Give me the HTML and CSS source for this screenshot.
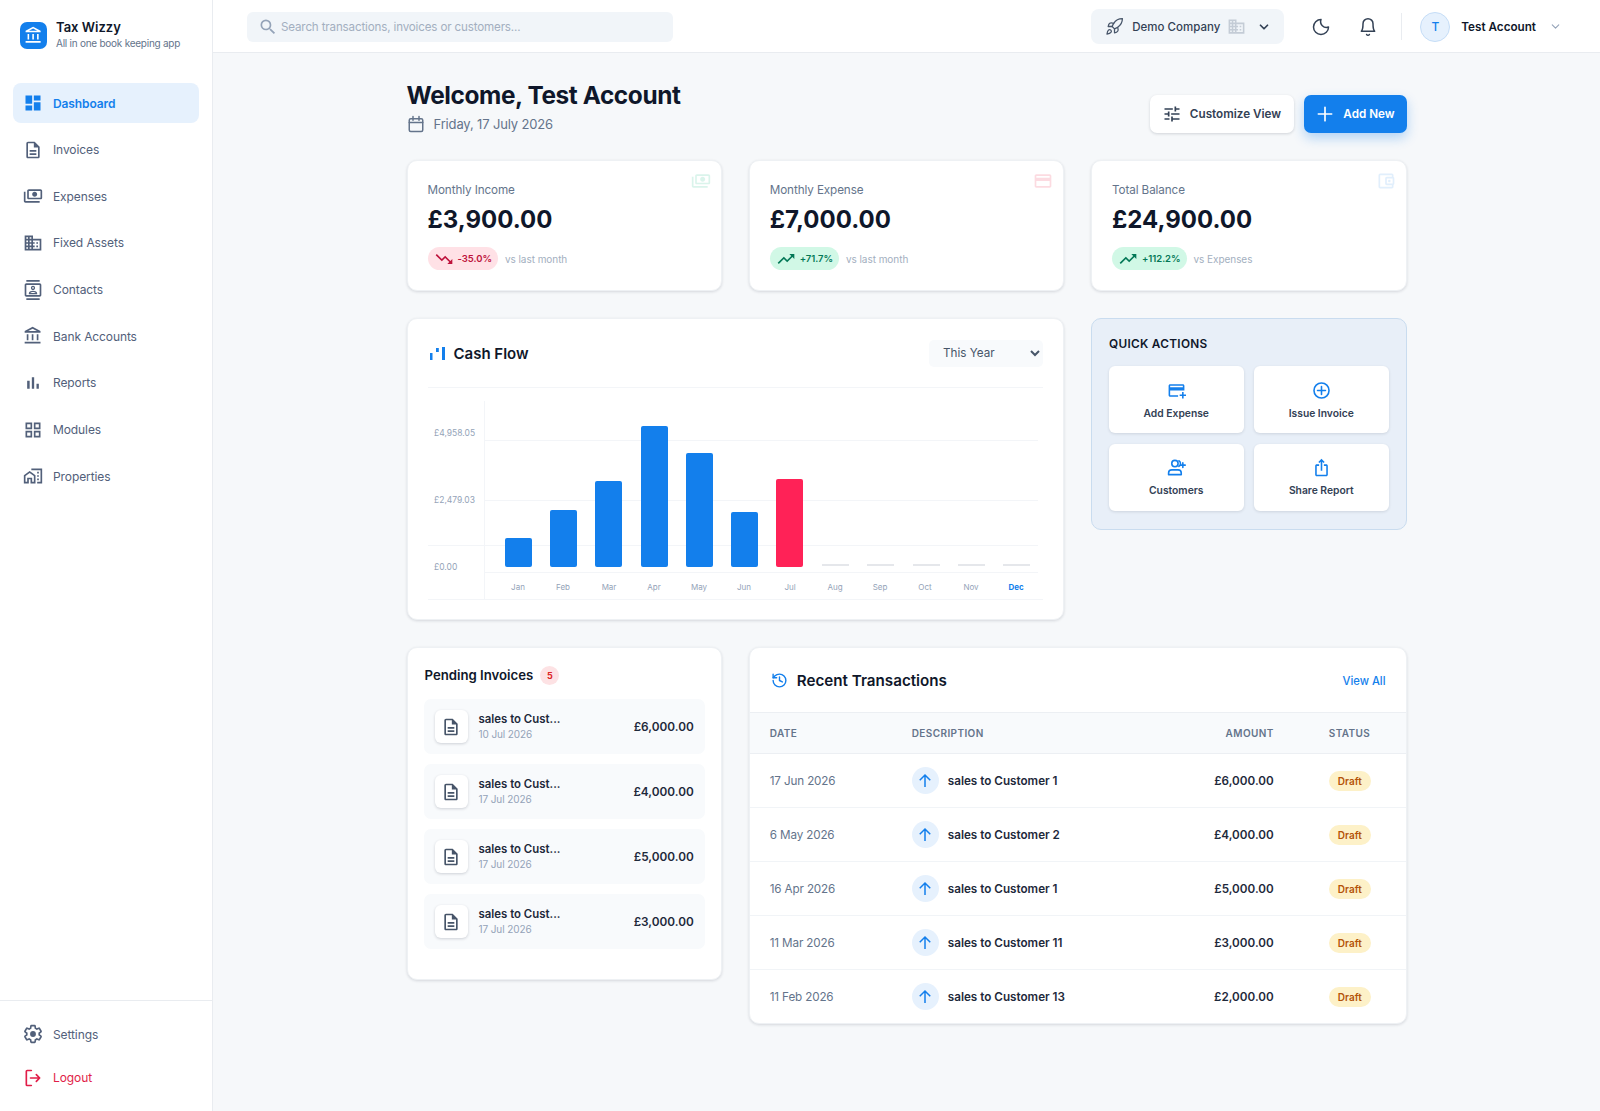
FILE: index.html
```html
<!DOCTYPE html>
<html lang="en">
<head>
  <meta charset="UTF-8" />
  <meta name="viewport" content="width=device-width, initial-scale=1.0"/>
  <title>Tax Wizzy - Dashboard</title>
  <link rel="stylesheet" href="styles.css">
</head>
<body>
  <svg class="sprites" width="0" height="0">
    <symbol id="i-doc" viewBox="0 0 24 24"><path d="M8 16h8v2H8zm0-4h8v2H8zm6-10H6c-1.1 0-2 .9-2 2v16c0 1.1.89 2 1.99 2H18c1.1 0 2-.9 2-2V8l-6-6zm4 18H6V4h7v5h5v11z"/></symbol>
    <symbol id="i-up" viewBox="0 0 24 24"><path d="M12 20V4M5 11l7-7 7 7" fill="none" stroke="currentColor" stroke-width="2"/></symbol>
    <symbol id="i-trend-up" viewBox="0 0 24 24"><path d="M16 6l2.29 2.29-4.88 4.88-4-4L2 16.59 3.41 18l6-6 4 4 6.3-6.29L22 12V6z"/></symbol>
    <symbol id="i-trend-down" viewBox="0 0 24 24"><path d="M16 18l2.29-2.29-4.88-4.88-4 4L2 7.41 3.41 6l6 6 4-4 6.3 6.29L22 12v6z"/></symbol>
    <symbol id="i-domain" viewBox="0 0 24 24"><path d="M12 7V3H2v18h20V7H12zM6 19H4v-2h2v2zm0-4H4v-2h2v2zm0-4H4V9h2v2zm0-4H4V5h2v2zm4 12H8v-2h2v2zm0-4H8v-2h2v2zm0-4H8V9h2v2zm0-4H8V5h2v2zm10 12h-8v-2h2v-2h-2v-2h2v-2h-2V9h8v10zm-2-8h-2v2h2v-2zm0 4h-2v2h2v-2z"/></symbol>
    <symbol id="i-bank" viewBox="0 0 24 24"><path d="M6.5 10h-2v7h2v-7zm6 0h-2v7h2v-7zm8.5 9H2v2h19v-2zm-2.5-9h-2v7h2v-7zm-7-6.74L16.71 6H6.29l5.21-2.74m0-2.26L2 6v2h19V6l-9.5-5z"/></symbol>
    <symbol id="i-money" viewBox="0 0 24 24"><path d="M5 14V6c0-1.1.9-2 2-2h14c1.1 0 2 .9 2 2v8c0 1.1-.9 2-2 2H7c-1.1 0-2-.9-2-2zm2 0h14V6H7v8zm7-7c1.66 0 3 1.34 3 3s-1.34 3-3 3-3-1.34-3-3 1.34-3 3-3zM1 7v11c0 1.1.9 2 2 2h17v-2H3V7H1z"/></symbol>
  </svg>

  <aside class="sidebar">
    <div class="brand">
      <div class="brand-logo"><svg viewBox="0 0 24 24"><use href="#i-bank"/></svg></div>
      <div>
        <div class="brand-name">Tax Wizzy</div>
        <div class="brand-sub">All in one book keeping app</div>
      </div>
    </div>

    <nav class="nav">
      <a class="nav-item active"><svg viewBox="0 0 24 24"><path d="M3 13h8V3H3v10zm0 8h8v-6H3v6zm10 0h8V11h-8v10zm0-18v6h8V3h-8z"/></svg>Dashboard</a>
      <a class="nav-item"><svg viewBox="0 0 24 24"><use href="#i-doc"/></svg>Invoices</a>
      <a class="nav-item"><svg viewBox="0 0 24 24"><use href="#i-money"/></svg>Expenses</a>
      <a class="nav-item"><svg viewBox="0 0 24 24"><use href="#i-domain"/></svg>Fixed Assets</a>
      <a class="nav-item"><svg viewBox="0 0 24 24"><path d="M20 0H4v2h16V0zM4 24h16v-2H4v2zM20 4H4c-1.1 0-2 .9-2 2v12c0 1.1.9 2 2 2h16c1.1 0 2-.9 2-2V6c0-1.1-.9-2-2-2zm0 14H4V6h16v12zm-8-6c1.38 0 2.5-1.12 2.5-2.5S13.38 7 12 7 9.5 8.12 9.5 9.5 10.62 12 12 12zm0-3.5c.55 0 1 .45 1 1s-.45 1-1 1-1-.45-1-1 .45-1 1-1zm5 7.49C17 13.9 13.69 13 12 13s-5 .9-5 2.99V17h10v-1.01zM8.81 15.5c.61-.52 2.03-1 3.19-1 1.17 0 2.59.48 3.2 1H8.81z"/></svg>Contacts</a>
      <a class="nav-item"><svg viewBox="0 0 24 24"><use href="#i-bank"/></svg>Bank Accounts</a>
      <a class="nav-item"><svg viewBox="0 0 24 24"><path d="M5 9.2h3V19H5zM10.6 5h2.8v14h-2.8zm5.6 8H19v6h-2.8z"/></svg>Reports</a>
      <a class="nav-item"><svg viewBox="0 0 24 24"><path d="M3 3v8h8V3H3zm6 6H5V5h4v4zm-6 4v8h8v-8H3zm6 6H5v-4h4v4zm4-16v8h8V3h-8zm6 6h-4V5h4v4zm-6 4v8h8v-8h-8zm6 6h-4v-4h4v4z"/></svg>Modules</a>
      <a class="nav-item"><svg viewBox="0 0 24 24"><path d="M1 11v10h6v-5h2v5h6V11L8 6l-7 5zm12 8h-2v-5H5v5H3v-7l5-3.5 5 3.5v7zM10 3v2h11v14h-4v2h6V3H10zm7 4h2v2h-2V7zm0 4h2v2h-2v-2zm0 4h2v2h-2v-2z"/></svg>Properties</a>
    </nav>

    <div class="sidebar-foot">
      <a class="nav-item"><svg viewBox="0 0 24 24"><path class="gear" d="M19.43 12.98c.04-.32.07-.64.07-.98 0-.34-.03-.66-.07-.98l2.11-1.65c.19-.15.24-.42.12-.64l-2-3.46a.5.5 0 0 0-.61-.22l-2.49 1c-.52-.4-1.08-.73-1.69-.98l-.38-2.65A.49.49 0 0 0 14 2h-4c-.25 0-.46.18-.49.42l-.38 2.65c-.61.25-1.17.59-1.69.98l-2.49-1a.57.57 0 0 0-.18-.03c-.17 0-.34.09-.43.25l-2 3.46c-.13.22-.07.49.12.64l2.11 1.65c-.04.32-.07.65-.07.98 0 .33.03.66.07.98l-2.11 1.65c-.19.15-.24.42-.12.64l2 3.46a.5.5 0 0 0 .61.22l2.49-1c.52.4 1.08.73 1.69.98l.38 2.65c.03.24.24.42.49.42h4c.25 0 .46-.18.49-.42l.38-2.65c.61-.25 1.17-.59 1.69-.98l2.49 1c.06.02.12.03.18.03.17 0 .34-.09.43-.25l2-3.46c.12-.22.07-.49-.12-.64l-2.11-1.65z"/><circle cx="12" cy="12" r="3.5"/></svg>Settings</a>
      <a class="nav-item logout"><svg viewBox="0 0 24 24"><path class="line" d="M10 3H5a1 1 0 0 0-1 1v16a1 1 0 0 0 1 1h5M9 12h11M16 8l4 4-4 4"/></svg>Logout</a>
    </div>
  </aside>

  <div class="page">
    <header class="topbar">
      <div class="search">
        <svg viewBox="0 0 24 24"><path d="M15.5 14h-.79l-.28-.27A6.47 6.47 0 0 0 16 9.5 6.5 6.5 0 1 0 9.5 16c1.61 0 3.09-.59 4.23-1.57l.27.28v.79l5 4.99L20.49 19l-4.99-5zm-6 0C7.01 14 5 11.99 5 9.5S7.01 5 9.5 5 14 7.01 14 9.5 11.99 14 9.5 14z"/></svg>
        <input type="text" placeholder="Search transactions, invoices or customers...">
      </div>

      <div class="topbar-right">
        <div class="company">
          <svg class="line-icon rocket" viewBox="0 0 24 24"><path d="M4.5 16.5c-1.5 1.26-2 5-2 5s3.74-.5 5-2c.71-.84.7-2.13-.09-2.91a2.18 2.18 0 0 0-2.91-.09z"/><path d="m12 15-3-3a22 22 0 0 1 2-3.95A12.88 12.88 0 0 1 22 2c0 2.72-.78 7.5-6 11a22.35 22.35 0 0 1-4 2z"/><path d="M9 12H4s.55-3.03 2-4c1.62-1.08 5 0 5 0"/><path d="M12 15v5s3.03-.55 4-2c1.08-1.62 0-5 0-5"/></svg>
          <span>Demo Company</span>
          <svg class="company-building" viewBox="0 0 24 24"><use href="#i-domain"/></svg>
          <svg class="line-icon company-chevron" viewBox="0 0 24 24"><path d="M6 9l6 6 6-6"/></svg>
        </div>
        <svg class="line-icon top-icon moon" viewBox="0 0 24 24"><path d="M12 3a9 9 0 1 0 9 9 7 7 0 0 1-9-9z"/></svg>
        <svg class="line-icon top-icon bell" viewBox="0 0 24 24"><path d="M6 8a6 6 0 0 1 12 0c0 7 2 9 2 9H4s2-2 2-9"/><path d="M10.3 21a1.94 1.94 0 0 0 3.4 0"/></svg>
        <div class="divider"></div>
        <div class="avatar">T</div>
        <span class="account-name">Test Account</span>
        <svg class="line-icon account-chevron" viewBox="0 0 24 24"><path d="M6 9l6 6 6-6"/></svg>
      </div>
    </header>

    <main class="content">
      <div class="page-head">
        <div>
          <h1>Welcome, Test Account</h1>
          <div class="today">
            <svg class="line-icon" viewBox="0 0 24 24"><rect x="3" y="5" width="18" height="17" rx="2"/><path d="M3 10h18M8 2v5M16 2v5"/></svg>
            Friday, 17 July 2026
          </div>
        </div>
        <div class="head-actions">
          <button class="btn btn-light"><svg viewBox="0 0 24 24"><path d="M3 17v2h6v-2H3zM3 5v2h10V5H3zm10 16v-2h8v-2h-8v-2h-2v6h2zM7 9v2H3v2h4v2h2V9H7zm14 4v-2H11v2h10zm-6-4h2V7h4V5h-4V3h-2v6z"/></svg>Customize View</button>
          <button class="btn btn-blue"><svg class="line-icon" viewBox="0 0 24 24"><path d="M12 4v16M4 12h16"/></svg>Add New</button>
        </div>
      </div>

      <div class="grid">
        <section class="card stat">
          <svg class="stat-icon money" viewBox="0 0 24 24"><use href="#i-money"/></svg>
          <div class="stat-label">Monthly Income</div>
          <div class="stat-value">£3,900.00</div>
          <div class="stat-foot">
            <span class="pill pill-red"><svg viewBox="0 0 24 24"><use href="#i-trend-down"/></svg>-35.0%</span>
            vs last month
          </div>
        </section>

        <section class="card stat">
          <svg class="stat-icon credit" viewBox="0 0 24 24"><path d="M20 4H4c-1.11 0-2 .89-2 2v12c0 1.11.89 2 2 2h16c1.11 0 2-.89 2-2V6c0-1.11-.89-2-2-2zm0 14H4v-6h16v6zm0-10H4V6h16v2z"/></svg>
          <div class="stat-label">Monthly Expense</div>
          <div class="stat-value">£7,000.00</div>
          <div class="stat-foot">
            <span class="pill pill-green"><svg viewBox="0 0 24 24"><use href="#i-trend-up"/></svg>+71.7%</span>
            vs last month
          </div>
        </section>

        <section class="card stat">
          <svg class="stat-icon wallet" viewBox="0 0 24 24"><path d="M21 7.28V5c0-1.1-.9-2-2-2H5a2 2 0 0 0-2 2v14a2 2 0 0 0 2 2h14c1.1 0 2-.9 2-2v-2.28A2 2 0 0 0 22 15V9a2 2 0 0 0-1-1.72zM20 9v6h-7V9h7zM5 19V5h14v2h-6c-1.1 0-2 .9-2 2v6c0 1.1.9 2 2 2h6v2H5z"/><circle cx="16" cy="12" r="1.5"/></svg>
          <div class="stat-label">Total Balance</div>
          <div class="stat-value">£24,900.00</div>
          <div class="stat-foot">
            <span class="pill pill-green"><svg viewBox="0 0 24 24"><use href="#i-trend-up"/></svg>+112.2%</span>
            vs Expenses
          </div>
        </section>

        <section class="card chart-card">
          <div class="chart-head">
            <h2>
              <svg class="flow-icon" viewBox="0 0 15 13"><rect x="0" y="6" width="2.5" height="7"/><rect x="6" y="1" width="2.8" height="4"/><rect x="12" y="0" width="3" height="13"/></svg>
              Cash Flow
            </h2>
            <select class="range">
              <option>This Year</option>
              <option>Last Year</option>
            </select>
          </div>
          <svg class="chart" viewBox="0 0 616 214" width="616" height="214">
            <g class="gridlines">
              <path d="M0 .5H615"/>
              <path d="M56 53.5H610M56 113.5H610M0 158.5H610M56 185.5H610M0 212.5H615"/>
              <path d="M56.5 14V212"/>
            </g>
            <g class="y-labels">
              <text x="6" y="49">£4,958.05</text>
              <text x="6" y="116">£2,479.03</text>
              <text x="6" y="183">£0.00</text>
            </g>
            <g class="bars">
              <rect x="77" y="151" width="27" height="29" rx="2"/>
              <rect x="122" y="123" width="27" height="57" rx="2"/>
              <rect x="167" y="94" width="27" height="86" rx="2"/>
              <rect x="213" y="39" width="27" height="141" rx="2"/>
              <rect x="258" y="66" width="27" height="114" rx="2"/>
              <rect x="303" y="125" width="27" height="55" rx="2"/>
              <rect class="bar-red" x="348" y="92" width="27" height="88" rx="2"/>
              <rect class="bar-empty" x="394" y="177" width="27" height="2"/>
              <rect class="bar-empty" x="439" y="177" width="27" height="2"/>
              <rect class="bar-empty" x="485" y="177" width="27" height="2"/>
              <rect class="bar-empty" x="530" y="177" width="27" height="2"/>
              <rect class="bar-empty" x="575" y="177" width="27" height="2"/>
            </g>
            <g class="x-labels">
              <text x="90" y="203">Jan</text>
              <text x="135" y="203">Feb</text>
              <text x="181" y="203">Mar</text>
              <text x="226" y="203">Apr</text>
              <text x="271" y="203">May</text>
              <text x="316" y="203">Jun</text>
              <text x="362" y="203">Jul</text>
              <text x="407" y="203">Aug</text>
              <text x="452" y="203">Sep</text>
              <text x="497" y="203">Oct</text>
              <text x="543" y="203">Nov</text>
              <text class="current" x="588" y="203">Dec</text>
            </g>
          </svg>
        </section>

        <section class="quick">
          <h3>QUICK ACTIONS</h3>
          <div class="quick-grid">
            <a class="quick-tile"><svg viewBox="0 0 24 24"><path d="M20 4H4c-1.11 0-1.99.89-1.99 2L2 18c0 1.11.89 2 2 2h10v-2H4v-6h18V6c0-1.11-.89-2-2-2zm0 4H4V6h16v2zm4 9v2h-3v3h-2v-3h-3v-2h3v-3h2v3h3z"/></svg>Add Expense</a>
            <a class="quick-tile"><svg class="line-icon" viewBox="0 0 24 24"><circle cx="12" cy="12" r="9.5"/><path d="M12 7v10M7 12h10"/></svg>Issue Invoice</a>
            <a class="quick-tile"><svg class="line-icon" viewBox="0 0 24 24"><circle cx="10" cy="7" r="4"/><path d="M2 21v-2a4 4 0 0 1 4-4h8a4 4 0 0 1 4 4v2zM15 3.5a4 4 0 0 1 0 7M20 6v6M17 9h6"/></svg>Customers</a>
            <a class="quick-tile"><svg viewBox="0 0 24 24"><path d="M16 5l-1.42 1.42-1.59-1.59V16h-1.98V4.83L9.42 6.42 8 5l4-4 4 4zm4 5v11c0 1.1-.9 2-2 2H6c-1.11 0-2-.9-2-2V10c0-1.11.89-2 2-2h3v2H6v11h12V10h-3V8h3c1.1 0 2 .9 2 2z"/></svg>Share Report</a>
          </div>
        </section>

        <section class="card pending">
          <h3 class="pending-title">Pending Invoices <span class="count">5</span></h3>
          <div class="pending-list">
            <div class="pending-row">
              <div class="doc-tile"><svg viewBox="0 0 24 24"><use href="#i-doc"/></svg></div>
              <div class="pending-text"><b>sales to Cust...</b><small>10 Jul 2026</small></div>
              <div class="pending-amount">£6,000.00</div>
            </div>
            <div class="pending-row">
              <div class="doc-tile"><svg viewBox="0 0 24 24"><use href="#i-doc"/></svg></div>
              <div class="pending-text"><b>sales to Cust...</b><small>17 Jul 2026</small></div>
              <div class="pending-amount">£4,000.00</div>
            </div>
            <div class="pending-row">
              <div class="doc-tile"><svg viewBox="0 0 24 24"><use href="#i-doc"/></svg></div>
              <div class="pending-text"><b>sales to Cust...</b><small>17 Jul 2026</small></div>
              <div class="pending-amount">£5,000.00</div>
            </div>
            <div class="pending-row">
              <div class="doc-tile"><svg viewBox="0 0 24 24"><use href="#i-doc"/></svg></div>
              <div class="pending-text"><b>sales to Cust...</b><small>17 Jul 2026</small></div>
              <div class="pending-amount">£3,000.00</div>
            </div>
          </div>
        </section>

        <section class="card recent">
          <div class="recent-head">
            <h2>
              <svg class="line-icon" viewBox="0 0 24 24"><path d="M3 12a9 9 0 1 0 9-9 9.75 9.75 0 0 0-6.74 2.74L3 8"/><path d="M3 3v5h5"/><path d="M12 7v5l4 2"/></svg>
              Recent Transactions
            </h2>
            <a class="view-all">View All</a>
          </div>
          <table class="tx-table">
            <thead>
              <tr><th class="col-date">DATE</th><th class="col-desc">DESCRIPTION</th><th class="col-amount">AMOUNT</th><th class="col-status">STATUS</th></tr>
            </thead>
            <tbody>
              <tr><td class="tx-date">17 Jun 2026</td><td><div class="tx-desc"><span class="tx-arrow"><svg viewBox="0 0 24 24"><use href="#i-up"/></svg></span>sales to Customer 1</div></td><td class="tx-amount">£6,000.00</td><td><span class="draft">Draft</span></td></tr>
              <tr><td class="tx-date">6 May 2026</td><td><div class="tx-desc"><span class="tx-arrow"><svg viewBox="0 0 24 24"><use href="#i-up"/></svg></span>sales to Customer 2</div></td><td class="tx-amount">£4,000.00</td><td><span class="draft">Draft</span></td></tr>
              <tr><td class="tx-date">16 Apr 2026</td><td><div class="tx-desc"><span class="tx-arrow"><svg viewBox="0 0 24 24"><use href="#i-up"/></svg></span>sales to Customer 1</div></td><td class="tx-amount">£5,000.00</td><td><span class="draft">Draft</span></td></tr>
              <tr><td class="tx-date">11 Mar 2026</td><td><div class="tx-desc"><span class="tx-arrow"><svg viewBox="0 0 24 24"><use href="#i-up"/></svg></span>sales to Customer 11</div></td><td class="tx-amount">£3,000.00</td><td><span class="draft">Draft</span></td></tr>
              <tr><td class="tx-date">11 Feb 2026</td><td><div class="tx-desc"><span class="tx-arrow"><svg viewBox="0 0 24 24"><use href="#i-up"/></svg></span>sales to Customer 13</div></td><td class="tx-amount">£2,000.00</td><td><span class="draft">Draft</span></td></tr>
            </tbody>
          </table>
        </section>
      </div>
    </main>
  </div>
</body>
</html>
```

FILE: styles.css
```css
* {
  box-sizing: border-box;
}
body {
  font-family: Inter, "Noto Sans", sans-serif;
  margin: 0;
  height: 1111px;
  overflow: hidden;
  display: flex;
  background: #f6f8fa;
  color: #0f172a;
}
.sprites {
  position: absolute;
}
h1, h2, h3 {
  margin: 0;
}
svg {
  fill: currentColor;
  flex: none;
}
.line-icon {
  fill: none;
  stroke: currentColor;
  stroke-width: 2;
  stroke-linecap: round;
  stroke-linejoin: round;
}

/* sidebar */
.sidebar {
  width: 213px;
  flex: none;
  display: flex;
  flex-direction: column;
  background: #fff;
  border-right: 1px solid #e9ecf0;
}
.brand {
  display: flex;
  align-items: flex-start;
  gap: 9px;
  padding: 20px 0 0 20px;
  height: 83px;
}
.brand-logo {
  width: 27px;
  height: 27px;
  margin-top: 2px;
  border-radius: 7px;
  background: #137fec;
  color: #fff;
  display: flex;
  align-items: center;
  justify-content: center;
}
.brand-logo svg {
  width: 19px;
  height: 19px;
}
.brand-name {
  font-size: 13px;
  font-weight: 600;
  line-height: 15px;
}
.brand-sub {
  font-size: 10px;
  line-height: 14px;
  margin-top: 1px;
  color: #64748b;
  letter-spacing: -0.25px;
}
.nav {
  flex: 1;
  padding: 0 13px;
  display: flex;
  flex-direction: column;
  gap: 6.67px;
}
.nav-item {
  display: flex;
  align-items: center;
  gap: 10px;
  height: 40px;
  padding-left: 10px;
  border-radius: 8px;
  font-size: 12px;
  letter-spacing: -0.1px;
  color: #52607a;
}
.nav-item svg {
  width: 20px;
  height: 20px;
}
.nav-item.active {
  background: #e6f1fd;
  color: #137fec;
  font-weight: 600;
}
.sidebar-foot {
  border-top: 1px solid #e9ecf0;
  height: 111px;
  padding: 13px 13px 0;
  display: flex;
  flex-direction: column;
  gap: 3.5px;
}
.gear {
  fill: none;
  stroke: currentColor;
  stroke-width: 2;
}
.logout {
  color: #e11d48;
}
.logout .line {
  fill: none;
  stroke: currentColor;
  stroke-width: 2;
  stroke-linecap: round;
  stroke-linejoin: round;
}

/* top bar */
.page {
  flex: 1;
  min-width: 0;
}
.topbar {
  height: 53px;
  background: #fff;
  border-bottom: 1px solid #e9ecf0;
  display: flex;
  align-items: center;
  justify-content: space-between;
  padding: 1px 38px 0 34px;
}
.search {
  width: 426px;
  height: 30px;
  display: flex;
  align-items: center;
  gap: 1px;
  padding-left: 11px;
  background: #f1f5f9;
  border-radius: 6px;
  color: #94a3b8;
}
.search svg {
  width: 20px;
  height: 20px;
}
.search input {
  flex: 1;
  border: none;
  background: none;
  outline: none;
  font: 11.6px Inter, sans-serif;
  letter-spacing: -0.15px;
}
.search input::placeholder {
  color: #a3afc0;
}
.topbar-right {
  display: flex;
  align-items: center;
}
.company {
  width: 193px;
  height: 35px;
  display: flex;
  align-items: center;
  padding-left: 14px;
  background: #f1f5f9;
  border-radius: 8px;
  font-size: 11.5px;
  font-weight: 500;
  color: #334155;
}
.rocket {
  width: 19px;
  height: 19px;
  stroke-width: 1.6;
  color: #475569;
  margin-right: 8px;
}
.company-building {
  width: 19px;
  height: 19px;
  margin-left: 7px;
  color: #c4ccd6;
}
.company-chevron {
  width: 14px;
  height: 14px;
  margin-left: 11px;
  stroke-width: 3;
  color: #334155;
}
.top-icon {
  width: 20px;
  height: 20px;
  color: #334155;
  stroke-width: 1.8;
}
.moon {
  margin-left: 27px;
}
.bell {
  margin-left: 27px;
}
.divider {
  width: 1px;
  height: 27px;
  background: #e9ecf0;
  margin-left: 23px;
}
.avatar {
  width: 30px;
  height: 30px;
  margin-left: 18px;
  border-radius: 50%;
  background: #e6f1fd;
  border: 1px solid #c5ddf7;
  color: #137fec;
  font-size: 12px;
  font-weight: 500;
  display: flex;
  align-items: center;
  justify-content: center;
}
.account-name {
  margin-left: 11px;
  font-size: 11.7px;
  font-weight: 600;
}
.account-chevron {
  width: 13px;
  height: 13px;
  margin-left: 13px;
  color: #94a3b8;
}

/* content */
.content {
  width: 1000px;
  margin: 0 auto;
}
.page-head {
  display: flex;
  justify-content: space-between;
  align-items: flex-start;
  height: 107px;
  padding-top: 27px;
}
h1 {
  font-size: 24.4px;
  font-weight: 700;
  line-height: 30px;
  letter-spacing: -0.4px;
}
.today {
  display: flex;
  align-items: center;
  gap: 9px;
  margin-top: 5px;
  font-size: 13px;
  letter-spacing: -0.15px;
  color: #64748b;
}
.today svg {
  width: 18px;
  height: 18px;
}
.head-actions {
  display: flex;
  gap: 10px;
  margin-top: 15px;
  align-items: center;
}
.btn {
  height: 38px;
  border: none;
  border-radius: 7px;
  font: 600 11.7px Inter, sans-serif;
  display: flex;
  align-items: center;
  gap: 8px;
}
.btn svg {
  width: 20px;
  height: 20px;
}
.btn-light {
  width: 144px;
  justify-content: center;
  background: #fff;
  color: #334155;
  box-shadow: 0 1px 3px rgba(15, 23, 42, 0.16);
}
.btn-blue {
  width: 103px;
  justify-content: center;
  background: #137fec;
  color: #fff;
  box-shadow: 0 5px 12px rgba(19, 127, 236, 0.3);
}
.grid {
  display: grid;
  grid-template-columns: repeat(3, 1fr);
  gap: 27px;
  align-items: start;
}
.card {
  background: #fff;
  border-radius: 10px;
  border: 1px solid #eef1f4;
  box-shadow: 0 1px 3px rgba(15, 23, 42, 0.14);
}

/* stat cards */
.stat {
  position: relative;
  height: 131px;
  padding: 21px 20px;
}
.stat-icon {
  position: absolute;
  top: 10px;
  right: 10px;
  width: 20px;
  height: 20px;
}
.money {
  color: #10b981;
  opacity: 0.15;
}
.credit {
  color: #f43f5e;
  opacity: 0.18;
}
.wallet {
  color: #137fec;
  opacity: 0.12;
}
.stat-label {
  font-size: 11.7px;
  line-height: 16px;
  letter-spacing: -0.1px;
  color: #64748b;
}
.stat-value {
  font-size: 24px;
  font-weight: 700;
  line-height: 30px;
  margin-top: 7px;
}
.stat-foot {
  display: flex;
  align-items: center;
  gap: 7px;
  margin-top: 12px;
  font-size: 10px;
  letter-spacing: -0.05px;
  color: #a3afc0;
}
.pill {
  height: 23px;
  padding: 0 6px;
  border-radius: 12px;
  display: flex;
  align-items: center;
  gap: 4px;
  font-size: 9.5px;
  font-weight: 600;
}
.pill svg {
  width: 20px;
  height: 20px;
}
.pill-red {
  background: #ffe1e6;
  color: #be123c;
}
.pill-green {
  background: #d1f8e6;
  color: #047857;
}

/* chart */
.chart-card {
  grid-column: span 2;
  height: 302px;
  padding: 0 20px;
}
.chart-head {
  height: 68px;
  display: flex;
  align-items: center;
  justify-content: space-between;
}
.chart-head h2 {
  display: flex;
  align-items: center;
  gap: 9px;
  font-size: 15px;
  font-weight: 600;
}
.flow-icon {
  width: 15px;
  height: 13px;
  margin-left: 2px;
  color: #137fec;
}
.range {
  width: 114px;
  height: 27px;
  border: none;
  border-radius: 5px;
  padding-left: 10px;
  background: #f8fafc;
  color: #475569;
  font: 11.7px Inter, sans-serif;
}
.chart {
  display: block;
}
.gridlines path {
  fill: none;
  stroke: #f3f5f8;
  stroke-width: 1;
}
.y-labels text {
  font-size: 8.5px;
  fill: #94a3b8;
}
.x-labels text {
  font-size: 8px;
  fill: #94a3b8;
  text-anchor: middle;
}
.x-labels .current {
  fill: #137fec;
  font-weight: 700;
}
.bars rect {
  fill: #137fec;
}
.bars .bar-red {
  fill: #ff2257;
}
.bars .bar-empty {
  fill: #e5e7eb;
}

/* quick actions */
.quick {
  height: 212px;
  padding: 16px 17px;
  background: #e8eff8;
  border: 1px solid #c9dcef;
  border-radius: 10px;
}
.quick h3 {
  font-size: 11.8px;
  font-weight: 600;
  line-height: 18px;
  letter-spacing: 0.3px;
}
.quick-grid {
  display: grid;
  grid-template-columns: 134.5px 134.5px;
  justify-content: space-between;
  grid-auto-rows: 67px;
  gap: 10.5px;
  margin-top: 13px;
}
.quick-tile {
  display: flex;
  flex-direction: column;
  align-items: center;
  justify-content: center;
  gap: 7px;
  background: #fff;
  border-radius: 6px;
  box-shadow: 0 1px 3px rgba(15, 23, 42, 0.12);
  font-size: 10.3px;
  font-weight: 600;
  color: #334155;
}
.quick-tile svg {
  width: 19px;
  height: 19px;
  color: #137fec;
}

/* pending invoices */
.pending {
  height: 333px;
  padding: 0 16px;
}
.pending-title {
  display: flex;
  align-items: center;
  gap: 7px;
  height: 51px;
  padding: 3px 0 0 1px;
  font-size: 13.2px;
  font-weight: 600;
}
.count {
  width: 19px;
  height: 19px;
  border-radius: 50%;
  background: #fde2e4;
  color: #dc2626;
  font-size: 9px;
  font-weight: 700;
  display: flex;
  align-items: center;
  justify-content: center;
}
.pending-list {
  display: flex;
  flex-direction: column;
  gap: 10px;
}
.pending-row {
  height: 55px;
  display: flex;
  align-items: center;
  padding: 0 11px;
  background: #f8fafc;
  border-radius: 7px;
}
.doc-tile {
  width: 33px;
  height: 33px;
  background: #fff;
  border-radius: 6px;
  box-shadow: 0 1px 3px rgba(15, 23, 42, 0.18);
  color: #475569;
  display: flex;
  align-items: center;
  justify-content: center;
}
.doc-tile svg {
  width: 20px;
  height: 20px;
}
.pending-text {
  margin-left: 11px;
  flex: 1;
  display: flex;
  flex-direction: column;
}
.pending-text b {
  font-size: 11.4px;
  font-weight: 600;
  line-height: 15px;
  color: #1e293b;
}
.pending-text small {
  font-size: 10px;
  line-height: 14px;
  letter-spacing: -0.1px;
  color: #94a3b8;
}
.pending-amount {
  font-size: 11.8px;
  font-weight: 600;
  color: #1e293b;
}

/* recent transactions */
.recent {
  grid-column: span 2;
  height: 377px;
  overflow: hidden;
}
.recent-head {
  height: 64px;
  padding: 1px 20px 0 21px;
  display: flex;
  align-items: center;
  justify-content: space-between;
}
.recent-head h2 {
  display: flex;
  align-items: center;
  gap: 9px;
  font-size: 15.2px;
  font-weight: 600;
}
.recent-head svg {
  width: 17px;
  height: 17px;
  color: #137fec;
}
.view-all {
  font-size: 11.2px;
  font-weight: 500;
  color: #137fec;
}
.tx-table {
  width: 100%;
  border-collapse: collapse;
  table-layout: fixed;
}
.tx-table th {
  height: 41px;
  font-size: 10px;
  font-weight: 600;
  letter-spacing: 0.4px;
  text-align: left;
  color: #64748b;
  background: #f8fafc;
  border-top: 1px solid #eceff3;
  border-bottom: 1px solid #eceff3;
}
.col-date {
  width: 161px;
  padding-left: 20px;
}
.col-desc {
  width: 251px;
}
.tx-table .col-amount {
  width: 113px;
  text-align: right;
}
.col-status {
  padding-left: 54px;
}
.tx-table td {
  height: 54px;
  border-bottom: 1px solid #f1f4f7;
  font-size: 11.7px;
}
.tx-table tr:last-child td {
  border-bottom: none;
}
.tx-table td:last-child {
  padding-left: 54px;
}
.tx-date {
  padding-left: 20px;
  letter-spacing: -0.15px;
  color: #64748b;
}
.tx-desc {
  display: flex;
  align-items: center;
  gap: 9px;
  font-weight: 600;
  color: #1e293b;
}
.tx-arrow {
  width: 27px;
  height: 27px;
  border-radius: 50%;
  background: #e6f1fd;
  color: #137fec;
  display: flex;
  align-items: center;
  justify-content: center;
}
.tx-arrow svg {
  width: 18px;
  height: 18px;
}
.tx-amount {
  text-align: right;
  font-weight: 600;
  color: #1e293b;
}
.draft {
  display: inline-block;
  width: 42px;
  height: 20px;
  line-height: 20px;
  text-align: center;
  border-radius: 10px;
  background: #fdf1c8;
  color: #b45309;
  font-size: 10px;
  font-weight: 600;
}
```
